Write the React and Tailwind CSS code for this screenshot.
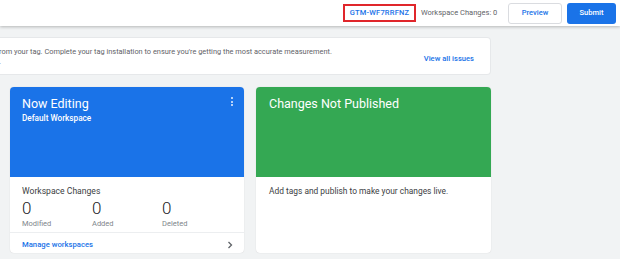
import React from "react";

export default function App() {
  return (
    <div className="w-[620px] h-[259px] overflow-hidden bg-[#f1f3f4] font-['Roboto',sans-serif]">
      {/* top bar */}
      <div className="h-[26px] bg-white shadow-[0_1px_3px_rgba(0,0,0,0.25)] flex items-center relative z-10">
        <div className="ml-[343px] h-[18px] w-[73px] shrink-0 border-[2px] border-[#e0262b] flex items-center justify-center text-[7.5px] font-medium text-[#1a73e8] tracking-[0.2px] whitespace-nowrap">
          GTM-WF7RRFNZ
        </div>
        <div className="ml-[5px] text-[7.5px] text-[#5f6368] w-[87px] shrink-0 whitespace-nowrap">Workspace Changes: 0</div>
        <div className="h-[21px] w-[54px] shrink-0 border border-[#dadce0] rounded-[3px] flex items-center justify-center text-[7.5px] font-medium text-[#1a73e8]">
          Preview
        </div>
        <div className="ml-[5px] h-[21px] w-[49px] shrink-0 bg-[#1a73e8] rounded-[3px] flex items-center justify-center text-[7.5px] font-medium text-white">
          Submit
        </div>
      </div>

      {/* banner */}
      <div className="mt-[11px] w-[491px] h-[38px] bg-white rounded-r-[4px] border border-l-0 border-[#e6e8ea] flex items-center">
        <div className="flex-1 text-[7.4px] leading-[10px] text-[#5f6368] pt-[1px]">
          <div className="ml-[-1px] whitespace-nowrap">rom your tag. Complete your tag installation to ensure you're getting the most accurate measurement.</div>
          <div className="ml-[-1px]">.</div>
        </div>
        <div className="text-[7.6px] font-medium text-[#1a73e8] mr-[16px] mt-[6px] whitespace-nowrap">View all issues</div>
      </div>

      {/* cards */}
      <div className="mt-[12px] ml-[10px] flex gap-[12px]">
        <div className="w-[234px] h-[166px] bg-white rounded-[4px] overflow-hidden shadow-[0_0_1px_rgba(0,0,0,0.2)] flex flex-col">
          <div className="h-[90px] bg-[#1a73e8] px-[12px] pt-[8px] relative text-white">
            <div className="text-[12.5px] leading-[17px]">Now Editing</div>
            <div className="text-[8.2px] font-medium leading-[11px] mt-[1px]">Default Workspace</div>
            <div className="absolute right-[11px] top-[10px] flex flex-col gap-[1.5px]">
              <span className="w-[2px] h-[2px] rounded-full bg-white/90" />
              <span className="w-[2px] h-[2px] rounded-full bg-white/90" />
              <span className="w-[2px] h-[2px] rounded-full bg-white/90" />
            </div>
          </div>
          <div className="px-[12px] pt-[8px] h-[56px] border-b border-[#eceef0]">
            <div className="text-[8.6px] leading-[12px] text-[#3c4043]">Workspace Changes</div>
            <div className="flex mt-[2px]">
              {["Modified", "Added", "Deleted"].map((l) => (
                <div key={l} className="w-[70px]">
                  <div className="text-[17px] leading-[18px] font-light text-[#202124]">0</div>
                  <div className="text-[7.5px] leading-[11px] text-[#80868b] mt-[1px]">{l}</div>
                </div>
              ))}
            </div>
          </div>
          <div className="flex-1 flex items-center justify-between px-[12px] pt-[3px]">
            <div className="text-[7.7px] font-medium text-[#1a73e8]">Manage workspaces</div>
            <svg width="6" height="8" viewBox="0 0 6 8" className="mr-[-1px]">
              <path d="M1.5 1 L4.5 4 L1.5 7" fill="none" stroke="#5f6368" strokeWidth="1.3" />
            </svg>
          </div>
        </div>

        <div className="w-[235px] h-[166px] bg-white rounded-[4px] overflow-hidden shadow-[0_0_1px_rgba(0,0,0,0.2)] flex flex-col">
          <div className="h-[90px] bg-[#34a853] px-[13px] pt-[8px] text-white">
            <div className="text-[12.5px] leading-[17px]">Changes Not Published</div>
          </div>
          <div className="px-[13px] pt-[8px] text-[8.4px] leading-[12px] text-[#3c4043]">
            Add tags and publish to make your changes live.
          </div>
        </div>
      </div>
    </div>
  );
}
